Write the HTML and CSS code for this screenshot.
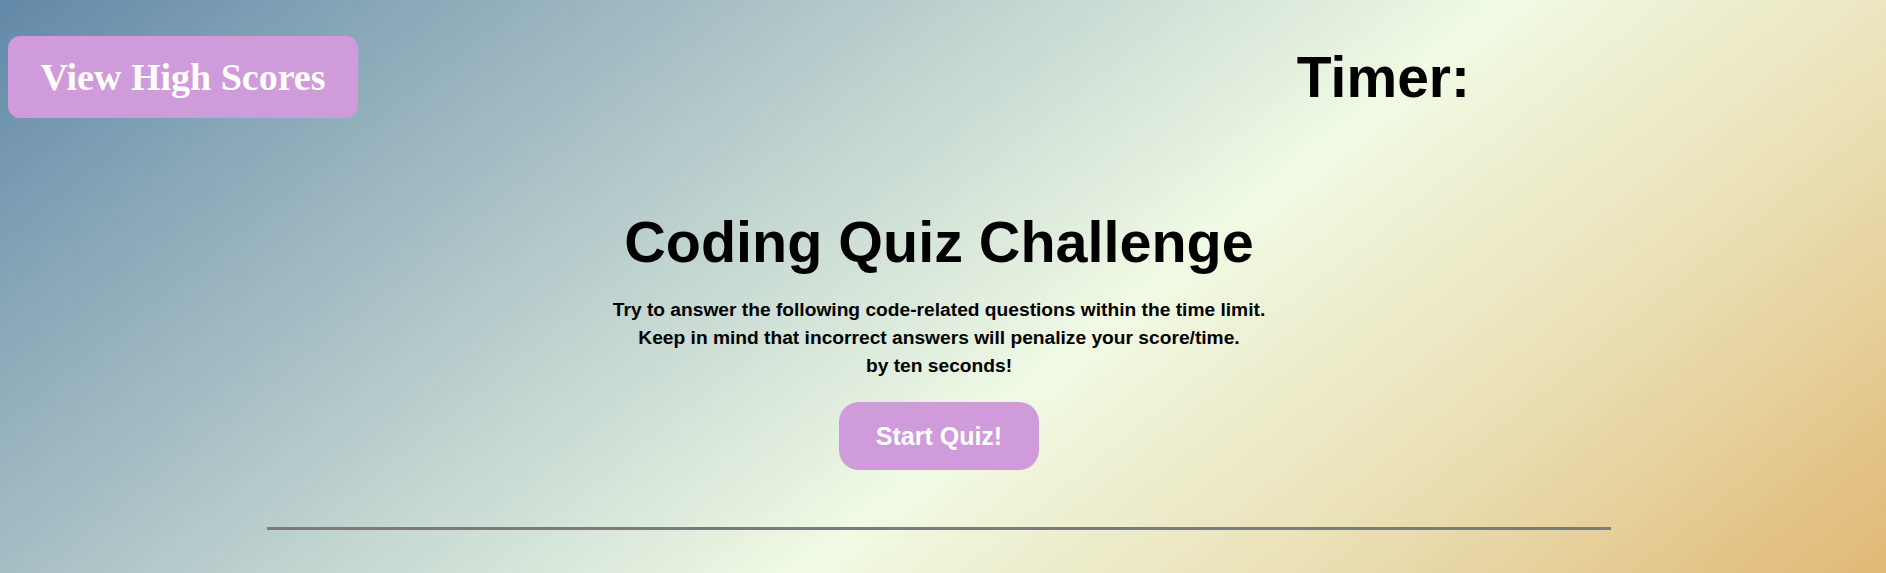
FILE: index.html
```html
<!DOCTYPE html>
<html lang="en">
<head>
<meta charset="utf-8">
<title>Coding Quiz Challenge</title>
<link rel="stylesheet" href="styles.css">
</head>
<body>
<header class="top-bar">
  <button class="scores-btn">View High Scores</button>
  <h2 class="timer">Timer:</h2>
</header>
<main class="intro">
  <h1 class="title">Coding Quiz Challenge</h1>
  <p class="rules">Try to answer the following code-related questions within the time limit.<br>Keep in mind that incorrect answers will penalize your score/time.<br>by ten seconds!</p>
  <button class="start-btn">Start Quiz!</button>
  <div class="divider"></div>
</main>
</body>
</html>
```

FILE: styles.css
```css
html, body {
  margin: 0;
  padding: 0;
  height: 100%;
}

body {
  font-family: "Liberation Sans", Arial, sans-serif;
  color: #000;
  background: linear-gradient(141deg, #6389a8 0%, #f0fae4 58%, #e9dcae 80%, #e0b874 100%);
  overflow: hidden;
}

.top-bar {
  display: flex;
  align-items: center;
  padding: 36px 0 0 8px;
  height: 82px;
}

.scores-btn {
  width: 350px;
  height: 82px;
  border: none;
  border-radius: 12px;
  background: #cf9bdb;
  color: #fff;
  font-family: "Liberation Serif", "Times New Roman", serif;
  font-weight: bold;
  font-size: 38px;
  padding: 0;
}

.timer {
  margin: 0 0 0 auto;
  margin-right: 416px;
  font-size: 57px;
  line-height: 64px;
  font-weight: bold;
}

.intro {
  display: flex;
  flex-direction: column;
  align-items: center;
  padding-right: 8px;
}

.title {
  margin: 92px 0 0;
  font-size: 57.5px;
  line-height: 64px;
  font-weight: bold;
}

.rules {
  margin: 22px 0 0;
  font-size: 19.2px;
  line-height: 28px;
  font-weight: bold;
  text-align: center;
}

.start-btn {
  margin-top: 22px;
  width: 200px;
  height: 68px;
  border: none;
  border-radius: 20px;
  background: #cf9bdb;
  color: #fff;
  font-family: "Liberation Sans", Arial, sans-serif;
  font-weight: bold;
  font-size: 25px;
  padding: 0;
}

.divider {
  margin-top: 57px;
  width: 1344px;
  height: 3px;
  background: #7b7b7b;
}
```
